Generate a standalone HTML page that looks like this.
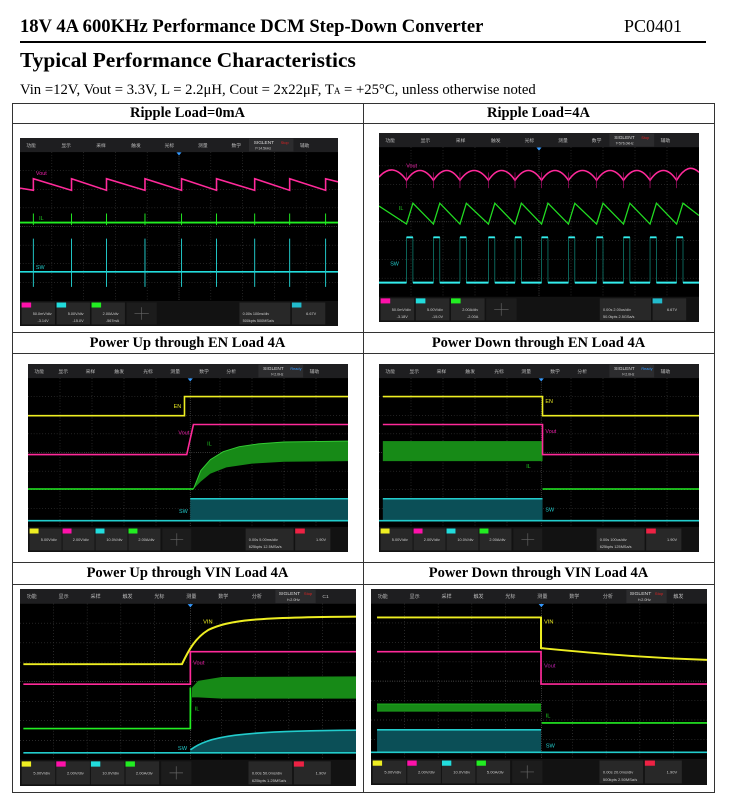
<!DOCTYPE html>
<html><head><meta charset="utf-8"><style>
body{margin:0;width:736px;height:808px;background:#fff;position:relative;overflow:hidden;font-family:"Liberation Serif",serif;color:#000}
.a{position:absolute}
.h{position:absolute;font-weight:bold;font-size:14.5px;text-align:center;line-height:21px}
svg.s{position:absolute;display:block}
svg text{font-family:"Liberation Sans","Noto Sans CJK SC",sans-serif}
</style></head><body>
<div class="a" style="left:20px;top:16px;font-size:18.6px;font-weight:bold;white-space:nowrap">18V 4A 600KHz Performance DCM Step-Down Converter</div>
<div class="a" style="left:624px;top:16px;font-size:18px;white-space:nowrap">PC0401</div>
<div class="a" style="left:20px;top:41px;width:686px;height:2px;background:#000"></div>
<div class="a" style="left:20px;top:48px;font-size:21.4px;font-weight:bold;white-space:nowrap">Typical Performance Characteristics</div>
<div class="a" style="left:20px;top:82px;font-size:14.7px;white-space:nowrap">Vin =12V, Vout = 3.3V, L = 2.2μH, Cout = 2x22μF, T<span style="font-size:9px">A</span> = +25°C, unless otherwise noted</div>
<!-- table -->
<div class="a" style="left:12px;top:103px;width:701px;height:688px;border:1px solid #333"></div>
<div class="a" style="left:363px;top:103px;width:1px;height:689px;background:#333"></div>
<div class="a" style="left:12px;top:123px;width:702px;height:1px;background:#333"></div>
<div class="a" style="left:12px;top:332px;width:702px;height:1px;background:#333"></div>
<div class="a" style="left:12px;top:353px;width:702px;height:1px;background:#333"></div>
<div class="a" style="left:12px;top:562px;width:702px;height:1px;background:#333"></div>
<div class="a" style="left:12px;top:584px;width:702px;height:1px;background:#333"></div>
<div class="h" style="left:12px;top:103px;width:351px">Ripple Load=0mA</div>
<div class="h" style="left:363px;top:103px;width:351px">Ripple Load=4A</div>
<div class="h" style="left:12px;top:333px;width:351px">Power Up through EN Load 4A</div>
<div class="h" style="left:363px;top:333px;width:351px">Power Down through EN Load 4A</div>
<div class="h" style="left:12px;top:563px;width:351px">Power Up through VIN Load 4A</div>
<div class="h" style="left:363px;top:563px;width:351px">Power Down through VIN Load 4A</div>

<!-- Panel 1 -->
<svg class="s" style="left:20px;top:138px" width="318" height="188" viewBox="0 0 1000 600" preserveAspectRatio="none">
<rect width="1000" height="600" fill="#000"/><rect width="1000" height="45" fill="#1e1e20"/>
<g font-size="15" fill="#bbb"><text x="20" y="28">功能</text><text x="130" y="28">显示</text><text x="240" y="28">采样</text><text x="350" y="28">触发</text><text x="455" y="28">光标</text><text x="560" y="28">测量</text><text x="665" y="28">数学</text><text x="770" y="28">分析</text><text x="880" y="28">辅助</text></g>
<rect x="720" y="2" width="140" height="41" fill="#2c2c2e"/><text x="735" y="19" font-size="15" fill="#ddd">SIGLENT</text><text x="820" y="19" font-size="12" fill="#d22">Stop</text><text x="740" y="37" font-size="11" fill="#ccc">f=14.5kHz</text>
<path d="M100 45V520M200 45V520M300 45V520M400 45V520M600 45V520M700 45V520M800 45V520M900 45V520M0 104H1000M0 164H1000M0 223H1000M0 342H1000M0 401H1000M0 461H1000" stroke="#555" stroke-width="2" stroke-dasharray="2 7"/>
<path d="M500 45V520M0 282H1000" stroke="#888" stroke-width="2" stroke-dasharray="2 5"/>
<path d="M492 46H508L500 56Z" fill="#39f"/>
<path d="M0 160L42 167L42 130L162 167L162 130L272 167L272 130L393 167L393 130L508 167L508 130L618 167L618 130L738 167L738 130L848 167L848 130L961 167L961 130L1000 140" stroke="#ff2a9a" stroke-width="5" fill="none"/>
<path d="M0 270H1000" stroke="#2e2" stroke-width="6"/>
<path d="M42 241V278M162 241V278M272 241V278M393 241V278M508 241V278M618 241V278M738 241V278M848 241V278M961 241V278" stroke="#2e2" stroke-width="3"/>
<path d="M0 427H1000" stroke="#2dd" stroke-width="5"/>
<path d="M42 321V475M162 321V475M272 321V475M393 321V475M508 321V475M618 321V475M738 321V475M848 321V475M961 321V475" stroke="#2cc" stroke-width="3"/>
<text x="50" y="118" font-size="17" fill="#e2a">Vout</text><text x="60" y="262" font-size="17" fill="#2c2">IL</text><text x="50" y="418" font-size="17" fill="#2cc">SW</text>
<rect y="520" width="1000" height="80" fill="#121212"/>
<rect x="5" y="525" width="105" height="70" fill="#282828"/><rect x="5" y="525" width="30" height="16" fill="#f1a"/>
<rect x="115" y="525" width="105" height="70" fill="#282828"/><rect x="115" y="525" width="30" height="16" fill="#2dd"/>
<rect x="225" y="525" width="105" height="70" fill="#282828"/><rect x="225" y="525" width="30" height="16" fill="#2e2"/>
<rect x="335" y="525" width="95" height="70" fill="#1c1c1c"/><path d="M360 560H405M382 540V580" stroke="#666" stroke-width="2"/>
<rect x="690" y="525" width="160" height="70" fill="#282828"/><rect x="855" y="525" width="105" height="70" fill="#282828"/><rect x="855" y="525" width="30" height="16" fill="#2bc"/>
<g font-size="12" fill="#ccc"><text x="40" y="565">50.0mV/div</text><text x="55" y="588">-3.14V</text><text x="150" y="565">5.00V/div</text><text x="165" y="588">-15.0V</text><text x="260" y="565">2.00A/div</text><text x="270" y="588">-567mA</text><text x="700" y="565">0.00s 100ns/div</text><text x="700" y="588">500kpts 500MSa/s</text><text x="900" y="565">6.67V</text></g>
</svg>

<!-- Panel 2 -->
<svg class="s" style="left:379px;top:133px" width="320" height="189" viewBox="0 0 1000 600" preserveAspectRatio="none">
<rect width="1000" height="600" fill="#000"/><rect width="1000" height="45" fill="#1e1e20"/>
<g font-size="15" fill="#bbb"><text x="20" y="28">功能</text><text x="130" y="28">显示</text><text x="240" y="28">采样</text><text x="350" y="28">触发</text><text x="455" y="28">光标</text><text x="560" y="28">测量</text><text x="665" y="28">数学</text><text x="770" y="28">分析</text><text x="880" y="28">辅助</text></g>
<rect x="720" y="2" width="140" height="41" fill="#2c2c2e"/><text x="735" y="19" font-size="15" fill="#ddd">SIGLENT</text><text x="820" y="19" font-size="12" fill="#d22">Stop</text><text x="740" y="37" font-size="11" fill="#ccc">f=576.0kHz</text>
<path d="M100 45V520M200 45V520M300 45V520M400 45V520M600 45V520M700 45V520M800 45V520M900 45V520M0 104H1000M0 164H1000M0 223H1000M0 342H1000M0 401H1000M0 461H1000" stroke="#555" stroke-width="2" stroke-dasharray="2 7"/>
<path d="M500 45V520M0 282H1000" stroke="#888" stroke-width="2" stroke-dasharray="2 5"/>
<path d="M492 46H508L500 56Z" fill="#39f"/>
<path d="M0 140Q43 90 86 150Q128 88 170 150Q212 88 253 150Q297 88 342 150Q383 88 425 150Q467 88 508 150Q550 88 592 150Q636 88 680 150Q722 88 764 150Q806 88 847 150Q889 88 930 150Q965 90 1000 125" stroke="#ff2a9a" stroke-width="5" fill="none"/>
<path d="M86 125V175M170 125V175M253 125V175M342 125V175M425 125V175M508 125V175M592 125V175M680 125V175M764 125V175M847 125V175M930 125V175" stroke="#b17" stroke-width="2"/>
<path d="M0 232L86 289L106 223L170 289L190 223L253 289L273 223L342 289L362 223L425 289L445 223L508 289L528 223L592 289L612 223L680 289L700 223L764 289L784 223L847 289L867 223L930 289L950 223L1000 262" stroke="#2d2" stroke-width="4" fill="none"/>
<path d="M0 475H86V331H106V475H170V331H190V475H253V331H273V475H342V331H362V475H425V331H445V475H508V331H528V475H592V331H612V475H680V331H700V475H764V331H784V475H847V331H867V475H930V331H950V475H1000" stroke="#198" stroke-width="2" fill="none"/>
<path d="M0 475H86M106 475H170M190 475H253M273 475H342M362 475H425M445 475H508M528 475H592M612 475H680M700 475H764M784 475H847M867 475H930M950 475H1000M86 331H106M170 331H190M253 331H273M342 331H362M425 331H445M508 331H528M592 331H612M680 331H700M764 331H784M847 331H867M930 331H950" stroke="#3ee" stroke-width="6"/>
<text x="85" y="110" font-size="17" fill="#e2a">Vout</text><text x="62" y="245" font-size="17" fill="#2c2">IL</text><text x="35" y="420" font-size="17" fill="#2cc">SW</text>
<rect y="520" width="1000" height="80" fill="#121212"/>
<rect x="5" y="525" width="105" height="70" fill="#282828"/><rect x="5" y="525" width="30" height="16" fill="#f1a"/>
<rect x="115" y="525" width="105" height="70" fill="#282828"/><rect x="115" y="525" width="30" height="16" fill="#2dd"/>
<rect x="225" y="525" width="105" height="70" fill="#282828"/><rect x="225" y="525" width="30" height="16" fill="#2e2"/>
<rect x="335" y="525" width="95" height="70" fill="#1c1c1c"/><path d="M360 560H405M382 540V580" stroke="#666" stroke-width="2"/>
<rect x="690" y="525" width="160" height="70" fill="#282828"/><rect x="855" y="525" width="105" height="70" fill="#282828"/><rect x="855" y="525" width="30" height="16" fill="#2bc"/>
<g font-size="12" fill="#ccc"><text x="40" y="565">50.0mV/div</text><text x="55" y="588">-3.18V</text><text x="150" y="565">5.00V/div</text><text x="165" y="588">-15.0V</text><text x="260" y="565">2.00A/div</text><text x="275" y="588">-2.00A</text><text x="700" y="565">0.00s 2.00us/div</text><text x="700" y="588">50.0kpts 2.5GSa/s</text><text x="900" y="565">6.67V</text></g>
</svg>

<!-- Panel 3 -->
<svg class="s" style="left:28px;top:364px" width="320" height="188" viewBox="0 0 1000 600" preserveAspectRatio="none">
<rect width="1000" height="600" fill="#000"/><rect width="1000" height="45" fill="#1e1e20"/>
<g font-size="15" fill="#bbb"><text x="20" y="28">功能</text><text x="95" y="28">显示</text><text x="180" y="28">采样</text><text x="270" y="28">触发</text><text x="360" y="28">光标</text><text x="445" y="28">测量</text><text x="535" y="28">数学</text><text x="620" y="28">分析</text><text x="880" y="28">辅助</text></g>
<rect x="720" y="2" width="140" height="41" fill="#2c2c2e"/><text x="735" y="19" font-size="15" fill="#ddd">SIGLENT</text><text x="820" y="19" font-size="12" fill="#39f">Ready</text><text x="760" y="37" font-size="11" fill="#ccc">f&lt;2.0Hz</text>
<path d="M100 45V520M200 45V520M300 45V520M400 45V520M600 45V520M700 45V520M800 45V520M900 45V520M0 104H1000M0 164H1000M0 223H1000M0 342H1000M0 401H1000M0 461H1000" stroke="#555" stroke-width="2" stroke-dasharray="2 7"/>
<path d="M507 45V520M0 282H1000" stroke="#888" stroke-width="2" stroke-dasharray="2 5"/>
<path d="M499 46H515L507 56Z" fill="#39f"/>
<polygon points="517,399 540,340 570,305 610,280 660,264 720,255 800,249 1000,246 1000,310 800,312 700,318 620,330 570,350 540,375 517,399" fill="#178a17"/>
<path d="M517 399L540 340L570 305L610 280L660 264L720 255L800 249L1000 246" stroke="#3c3" stroke-width="3" fill="none"/>
<path d="M0 399H517" stroke="#2e2" stroke-width="5"/>
<rect x="507" y="430" width="493" height="70" fill="#0b4f57"/>
<path d="M507 430H1000" stroke="#2cc" stroke-width="5"/><path d="M0 500H1000" stroke="#2cc" stroke-width="5"/>
<path d="M0 165H489V104H1000" stroke="#ee2" stroke-width="5" fill="none"/>
<path d="M0 289H496L517 193H1000" stroke="#ff2a9a" stroke-width="5" fill="none"/>
<text x="455" y="140" font-size="17" fill="#ee2">EN</text><text x="470" y="225" font-size="17" fill="#e2a">Vout</text><text x="560" y="260" font-size="17" fill="#2c2">IL</text><text x="472" y="475" font-size="17" fill="#2cc">SW</text>
<rect y="520" width="1000" height="80" fill="#121212"/>
<rect x="5" y="525" width="100" height="70" fill="#282828"/><rect x="5" y="525" width="28" height="16" fill="#ee2"/>
<rect x="108" y="525" width="100" height="70" fill="#282828"/><rect x="108" y="525" width="28" height="16" fill="#f1a"/>
<rect x="211" y="525" width="100" height="70" fill="#282828"/><rect x="211" y="525" width="28" height="16" fill="#2dd"/>
<rect x="314" y="525" width="100" height="70" fill="#282828"/><rect x="314" y="525" width="28" height="16" fill="#2e2"/>
<rect x="420" y="525" width="90" height="70" fill="#1c1c1c"/><path d="M445 560H485M465 540V580" stroke="#666" stroke-width="2"/>
<rect x="680" y="525" width="150" height="70" fill="#282828"/><rect x="835" y="525" width="110" height="70" fill="#282828"/><rect x="835" y="525" width="30" height="16" fill="#e24"/>
<g font-size="12" fill="#ccc"><text x="40" y="565">5.00V/div</text><text x="140" y="565">2.00V/div</text><text x="245" y="565">10.0V/div</text><text x="345" y="565">2.00A/div</text><text x="690" y="565">0.00s 5.00ms/div</text><text x="690" y="588">625kpts 12.5MSa/s</text><text x="900" y="565">1.90V</text></g>
</svg>

<!-- Panel 4 -->
<svg class="s" style="left:379px;top:364px" width="320" height="188" viewBox="0 0 1000 600" preserveAspectRatio="none">
<rect width="1000" height="600" fill="#000"/><rect width="1000" height="45" fill="#1e1e20"/>
<g font-size="15" fill="#bbb"><text x="20" y="28">功能</text><text x="95" y="28">显示</text><text x="180" y="28">采样</text><text x="270" y="28">触发</text><text x="360" y="28">光标</text><text x="445" y="28">测量</text><text x="535" y="28">数学</text><text x="620" y="28">分析</text><text x="880" y="28">辅助</text></g>
<rect x="720" y="2" width="140" height="41" fill="#2c2c2e"/><text x="735" y="19" font-size="15" fill="#ddd">SIGLENT</text><text x="820" y="19" font-size="12" fill="#39f">Ready</text><text x="760" y="37" font-size="11" fill="#ccc">f&lt;2.0Hz</text>
<path d="M100 45V520M200 45V520M300 45V520M400 45V520M600 45V520M700 45V520M800 45V520M900 45V520M0 104H1000M0 164H1000M0 223H1000M0 342H1000M0 401H1000M0 461H1000" stroke="#555" stroke-width="2" stroke-dasharray="2 7"/>
<path d="M507 45V520M0 282H1000" stroke="#888" stroke-width="2" stroke-dasharray="2 5"/>
<path d="M499 46H515L507 56Z" fill="#39f"/>
<rect x="12" y="246" width="499" height="64" fill="#178a17"/>
<path d="M511 399H1000" stroke="#2e2" stroke-width="5"/>
<rect x="12" y="430" width="499" height="70" fill="#0b4f57"/>
<path d="M12 430H511" stroke="#2cc" stroke-width="5"/><path d="M0 500H1000" stroke="#2cc" stroke-width="5"/>
<path d="M12 104H511V165H1000" stroke="#ee2" stroke-width="5" fill="none"/>
<path d="M12 193H511V289H1000" stroke="#ff2a9a" stroke-width="5" fill="none"/>
<text x="520" y="125" font-size="17" fill="#ee2">EN</text><text x="520" y="220" font-size="17" fill="#e2a">Vout</text><text x="460" y="332" font-size="17" fill="#2c2">IL</text><text x="520" y="470" font-size="17" fill="#2cc">SW</text>
<rect y="520" width="1000" height="80" fill="#121212"/>
<rect x="5" y="525" width="100" height="70" fill="#282828"/><rect x="5" y="525" width="28" height="16" fill="#ee2"/>
<rect x="108" y="525" width="100" height="70" fill="#282828"/><rect x="108" y="525" width="28" height="16" fill="#f1a"/>
<rect x="211" y="525" width="100" height="70" fill="#282828"/><rect x="211" y="525" width="28" height="16" fill="#2dd"/>
<rect x="314" y="525" width="100" height="70" fill="#282828"/><rect x="314" y="525" width="28" height="16" fill="#2e2"/>
<rect x="420" y="525" width="90" height="70" fill="#1c1c1c"/><path d="M445 560H485M465 540V580" stroke="#666" stroke-width="2"/>
<rect x="680" y="525" width="150" height="70" fill="#282828"/><rect x="835" y="525" width="110" height="70" fill="#282828"/><rect x="835" y="525" width="30" height="16" fill="#e24"/>
<g font-size="12" fill="#ccc"><text x="40" y="565">5.00V/div</text><text x="140" y="565">2.00V/div</text><text x="245" y="565">10.0V/div</text><text x="345" y="565">2.00A/div</text><text x="690" y="565">0.00s 100us/div</text><text x="690" y="588">625kpts 125MSa/s</text><text x="900" y="565">1.90V</text></g>
</svg>

<!-- Panel 5 -->
<svg class="s" style="left:20px;top:589px" width="336" height="197" viewBox="0 0 1000 600" preserveAspectRatio="none">
<rect width="1000" height="600" fill="#000"/><rect width="1000" height="45" fill="#1e1e20"/>
<g font-size="15" fill="#bbb"><text x="20" y="28">功能</text><text x="115" y="28">显示</text><text x="210" y="28">采样</text><text x="305" y="28">触发</text><text x="400" y="28">光标</text><text x="495" y="28">测量</text><text x="590" y="28">数学</text><text x="690" y="28">分析</text><text x="900" y="28">C1</text></g>
<rect x="760" y="2" width="120" height="41" fill="#2c2c2e"/><text x="770" y="19" font-size="15" fill="#ddd">SIGLENT</text><text x="845" y="19" font-size="12" fill="#d22">Stop</text><text x="795" y="37" font-size="11" fill="#ccc">f&lt;2.0Hz</text>
<path d="M100 45V520M200 45V520M300 45V520M400 45V520M600 45V520M700 45V520M800 45V520M900 45V520M0 104H1000M0 164H1000M0 223H1000M0 342H1000M0 401H1000M0 461H1000" stroke="#555" stroke-width="2" stroke-dasharray="2 7"/>
<path d="M507 45V520M0 282H1000" stroke="#888" stroke-width="2" stroke-dasharray="2 5"/>
<path d="M499 46H515L507 56Z" fill="#39f"/>
<path d="M10 229H482C500 190 520 150 560 125C620 95 700 86 1000 84" stroke="#ee2" stroke-width="6" fill="none"/>
<path d="M10 290H507V191H1000" stroke="#ff2a9a" stroke-width="5" fill="none"/>
<polygon points="507,425 512,300 530,280 600,268 1000,266 1000,334 600,334 530,330 512,330" fill="#178a17"/>
<path d="M10 425H507V300" stroke="#2e2" stroke-width="5" fill="none"/>
<path d="M507 490C560 450 640 432 1000 430V500H507Z" fill="#0b4f57"/>
<path d="M507 490C560 450 640 432 1000 430" stroke="#2cc" stroke-width="5" fill="none"/>
<path d="M10 499H1000" stroke="#2cc" stroke-width="5"/>
<text x="545" y="105" font-size="17" fill="#ee2">VIN</text><text x="515" y="230" font-size="17" fill="#e2a">Vout</text><text x="520" y="370" font-size="17" fill="#2c2">IL</text><text x="470" y="490" font-size="17" fill="#2cc">SW</text>
<rect y="520" width="1000" height="80" fill="#121212"/>
<rect x="5" y="525" width="100" height="70" fill="#282828"/><rect x="5" y="525" width="28" height="16" fill="#ee2"/>
<rect x="108" y="525" width="100" height="70" fill="#282828"/><rect x="108" y="525" width="28" height="16" fill="#f1a"/>
<rect x="211" y="525" width="100" height="70" fill="#282828"/><rect x="211" y="525" width="28" height="16" fill="#2dd"/>
<rect x="314" y="525" width="100" height="70" fill="#282828"/><rect x="314" y="525" width="28" height="16" fill="#2e2"/>
<rect x="420" y="525" width="90" height="70" fill="#1c1c1c"/><path d="M445 560H485M465 540V580" stroke="#666" stroke-width="2"/>
<rect x="680" y="525" width="130" height="70" fill="#282828"/><rect x="815" y="525" width="110" height="70" fill="#282828"/><rect x="815" y="525" width="30" height="16" fill="#e24"/>
<g font-size="12" fill="#ccc"><text x="40" y="565">5.00V/div</text><text x="140" y="565">2.00V/div</text><text x="245" y="565">10.0V/div</text><text x="345" y="565">2.00A/div</text><text x="690" y="565">0.00s 50.0ms/div</text><text x="690" y="588">625kpts 1.25MSa/s</text><text x="880" y="565">1.90V</text></g>
</svg>

<!-- Panel 6 -->
<svg class="s" style="left:371px;top:589px" width="336" height="196" viewBox="0 0 1000 600" preserveAspectRatio="none">
<rect width="1000" height="600" fill="#000"/><rect width="1000" height="45" fill="#1e1e20"/>
<g font-size="15" fill="#bbb"><text x="20" y="28">功能</text><text x="115" y="28">显示</text><text x="210" y="28">采样</text><text x="305" y="28">触发</text><text x="400" y="28">光标</text><text x="495" y="28">测量</text><text x="590" y="28">数学</text><text x="690" y="28">分析</text><text x="900" y="28">触发</text></g>
<rect x="760" y="2" width="120" height="41" fill="#2c2c2e"/><text x="770" y="19" font-size="15" fill="#ddd">SIGLENT</text><text x="845" y="19" font-size="12" fill="#d22">Stop</text><text x="795" y="37" font-size="11" fill="#ccc">f&lt;2.0Hz</text>
<path d="M100 45V520M200 45V520M300 45V520M400 45V520M600 45V520M700 45V520M800 45V520M900 45V520M0 104H1000M0 164H1000M0 223H1000M0 342H1000M0 401H1000M0 461H1000" stroke="#555" stroke-width="2" stroke-dasharray="2 7"/>
<path d="M507 45V520M0 282H1000" stroke="#888" stroke-width="2" stroke-dasharray="2 5"/>
<path d="M499 46H515L507 56Z" fill="#39f"/>
<path d="M18 87H506V181C650 195 800 210 1000 217" stroke="#ee2" stroke-width="6" fill="none"/>
<path d="M18 192H506V291H1000" stroke="#ff2a9a" stroke-width="5" fill="none"/>
<rect x="18" y="351" width="488" height="24" fill="#178a17"/>
<path d="M18 352H506M18 374H506" stroke="#2b2" stroke-width="2"/>
<path d="M508 410H1000" stroke="#2e2" stroke-width="5"/>
<rect x="18" y="431" width="488" height="69" fill="#0b4f57"/>
<path d="M18 431H506" stroke="#2cc" stroke-width="5"/><path d="M0 500H1000" stroke="#2cc" stroke-width="5"/>
<text x="515" y="105" font-size="17" fill="#ee2">VIN</text><text x="515" y="240" font-size="17" fill="#b2a">Vout</text><text x="520" y="393" font-size="17" fill="#2c2">IL</text><text x="520" y="485" font-size="17" fill="#2cc">SW</text>
<rect y="520" width="1000" height="80" fill="#121212"/>
<rect x="5" y="525" width="100" height="70" fill="#282828"/><rect x="5" y="525" width="28" height="16" fill="#ee2"/>
<rect x="108" y="525" width="100" height="70" fill="#282828"/><rect x="108" y="525" width="28" height="16" fill="#f1a"/>
<rect x="211" y="525" width="100" height="70" fill="#282828"/><rect x="211" y="525" width="28" height="16" fill="#2dd"/>
<rect x="314" y="525" width="100" height="70" fill="#282828"/><rect x="314" y="525" width="28" height="16" fill="#2e2"/>
<rect x="420" y="525" width="90" height="70" fill="#1c1c1c"/><path d="M445 560H485M465 540V580" stroke="#666" stroke-width="2"/>
<rect x="680" y="525" width="130" height="70" fill="#282828"/><rect x="815" y="525" width="110" height="70" fill="#282828"/><rect x="815" y="525" width="30" height="16" fill="#e24"/>
<g font-size="12" fill="#ccc"><text x="40" y="565">5.00V/div</text><text x="140" y="565">2.00V/div</text><text x="245" y="565">10.0V/div</text><text x="345" y="565">5.00A/div</text><text x="690" y="565">0.00s 20.0ms/div</text><text x="690" y="588">500kpts 2.50MSa/s</text><text x="880" y="565">1.90V</text></g>
</svg>
</body></html>
